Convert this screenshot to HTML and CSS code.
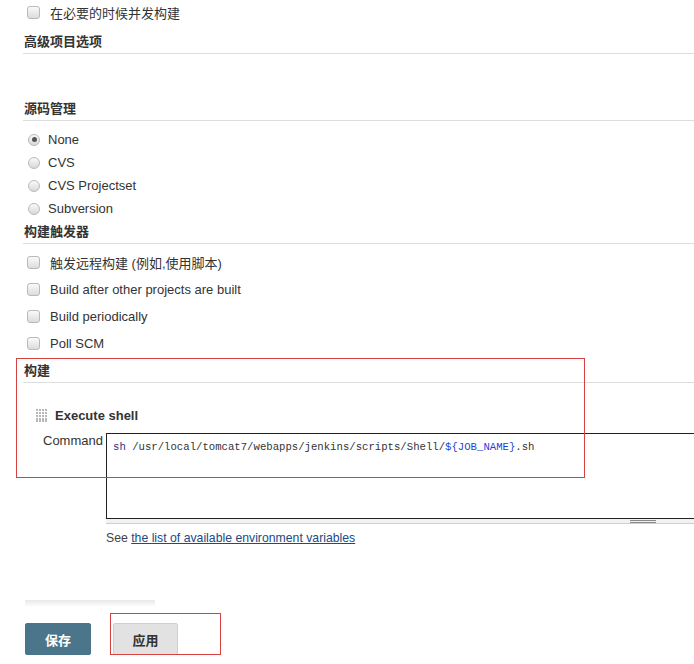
FILE: index.html
```html
<!DOCTYPE html>
<html lang="zh">
<head>
    <meta charset="UTF-8">
    <title>配置</title>
    <link rel="stylesheet" href="styles.css">
</head>
<body>
    <div class="page">
        <div class="check-row"><span class="checkbox"></span><span>在必要的时候并发构建</span></div>

        <div class="section-head first">高级项目选项</div>
        <div class="section-head scm">源码管理</div>
        <div class="radio-list">
            <div class="radio-row"><span class="radio checked"></span><span>None</span></div>
            <div class="radio-row"><span class="radio"></span><span>CVS</span></div>
            <div class="radio-row"><span class="radio"></span><span>CVS Projectset</span></div>
            <div class="radio-row"><span class="radio"></span><span>Subversion</span></div>
        </div>

        <div class="section-head triggers">构建触发器</div>
        <div class="check-list">
            <div class="check-row"><span class="checkbox"></span><span>触发远程构建 (例如,使用脚本)</span></div>
            <div class="check-row"><span class="checkbox"></span><span>Build after other projects are built</span></div>
            <div class="check-row"><span class="checkbox"></span><span>Build periodically</span></div>
            <div class="check-row"><span class="checkbox"></span><span>Poll SCM</span></div>
        </div>

        <div class="section-head build">构建</div>
        <div class="builder-title">
            <svg class="handle" width="12" height="13" viewBox="0 0 12 13">
                <g fill="#b8b8b8">
                    <rect x="0" y="0" width="2" height="2"/><rect x="3" y="0" width="2" height="2"/><rect x="6" y="0" width="2" height="2"/><rect x="9" y="0" width="2" height="2"/>
                    <rect x="0" y="3" width="2" height="2"/><rect x="3" y="3" width="2" height="2"/><rect x="6" y="3" width="2" height="2"/><rect x="9" y="3" width="2" height="2"/>
                    <rect x="0" y="6" width="2" height="2"/><rect x="3" y="6" width="2" height="2"/><rect x="6" y="6" width="2" height="2"/><rect x="9" y="6" width="2" height="2"/>
                    <rect x="0" y="9" width="2" height="2"/><rect x="3" y="9" width="2" height="2"/><rect x="6" y="9" width="2" height="2"/><rect x="9" y="9" width="2" height="2"/>
                    <rect x="0" y="11" width="2" height="2"/><rect x="3" y="11" width="2" height="2"/><rect x="6" y="11" width="2" height="2"/><rect x="9" y="11" width="2" height="2"/>
                </g>
            </svg>
            <span>Execute shell</span>
        </div>
        <div class="field">
            <div class="field-label">Command</div>
            <div class="editor-wrap">
                <div class="editor"><span class="kw">sh</span> /usr/local/tomcat7/webapps/jenkins/scripts/Shell/<span class="var">${JOB_NAME}</span>.sh</div>
                <div class="resizer"><span class="grip"></span></div>
                <div class="help">See <a href="#">the list of available environment variables</a></div>
            </div>
        </div>

        <div class="bottom-shade"></div>
        <div class="actions">
            <button class="btn save">保存</button>
            <button class="btn apply">应用</button>
        </div>

        <div class="mark mark-build"></div>
        <div class="mark mark-apply"></div>
    </div>
</body>
</html>
```

FILE: styles.css
```css
body {
    margin: 0;
    overflow: hidden;
    background: #fff;
    color: #333;
    font-family: 'Liberation Sans', Arial, 'Noto Sans CJK SC', sans-serif;
    font-size: 13px;
}

.page {
    position: relative;
    width: 694px;
    height: 664px;
    overflow: hidden;
}

.check-row {
    display: flex;
    align-items: center;
    gap: 10px;
    height: 24px;
    padding-left: 27px;
}

.check-list { margin-top: 5px; }
.check-list .check-row { height: 27px; }

.checkbox {
    width: 11px;
    height: 11px;
    border: 1px solid #b9b9b9;
    border-radius: 3px;
    background: linear-gradient(#fafafa, #dcdcdc);
    flex: none;
}

.radio-list { margin-top: 7px; }

.radio-row {
    display: flex;
    align-items: center;
    gap: 8px;
    height: 23px;
    padding-left: 28px;
}

.radio {
    width: 10px;
    height: 10px;
    border: 1px solid #b9b9b9;
    border-radius: 50%;
    background: linear-gradient(#fafafa, #d8d8d8);
    flex: none;
    display: flex;
    align-items: center;
    justify-content: center;
}

.radio.checked::after {
    content: "";
    width: 5px;
    height: 5px;
    border-radius: 50%;
    background: #555;
}

.section-head {
    margin-left: 23px;
    padding: 0 0 2px 1px;
    line-height: 18px;
    font-weight: bold;
    border-bottom: 1px solid #ddd;
    color: #333;
}

.section-head.first { margin-top: 9px; }
.section-head.scm { margin-top: 46px; }
.section-head.triggers { margin-top: 3px; }
.section-head.build { margin-top: 5px; }

.builder-title {
    display: flex;
    align-items: center;
    gap: 7px;
    height: 20px;
    margin: 22px 0 0 36px;
    font-weight: bold;
}

.field {
    display: flex;
    margin-top: 8px;
    padding-left: 43px;
}

.field-label {
    flex: none;
    width: 63px;
    line-height: 16px;
}

.editor-wrap {
    flex: 1;
    min-width: 0;
}

.editor {
    height: 74px;
    border: 1px solid #222;
    border-right: none;
    padding: 5px 6px;
    font-family: 'Liberation Mono', 'Courier New', monospace;
    font-size: 10.65px;
    line-height: 16px;
    color: #333;
    white-space: pre;
}

.editor .kw { color: #30307a; }
.editor .var { color: #1f3fd6; }

.resizer {
    height: 4px;
    padding-right: 38px;
    background: #f2f2f2;
    border-bottom: 1px solid #cfcfcf;
    display: flex;
    justify-content: flex-end;
    align-items: center;
}

.grip {
    width: 26px;
    height: 1px;
    border-top: 1px solid #888;
    border-bottom: 1px solid #888;
}

.help {
    margin-top: 6px;
    font-size: 12.25px;
    line-height: 16px;
    color: #444;
}

.help a { color: #204a87; }

.bottom-shade {
    width: 130px;
    height: 7px;
    margin: 54px 0 0 25px;
    background: linear-gradient(#e8e8e8, #fff);
}

.actions {
    display: flex;
    gap: 22px;
    margin: 16px 0 0 25px;
}

.btn {
    height: 32px;
    border-radius: 2px;
    font-family: 'Liberation Sans', 'Noto Sans CJK SC', sans-serif;
    font-size: 13px;
    font-weight: bold;
}

.btn.save {
    width: 66px;
    border: 1px solid #4b758b;
    background: #4b758b;
    color: #fff;
}

.btn.apply {
    width: 65px;
    border: 1px solid #cfcfcf;
    background: #e2e2e2;
    color: #333;
}

.mark {
    position: absolute;
    border: 1px solid #d6423f;
}

.mark-build { left: 16px; top: 358px; width: 567px; height: 118px; }
.mark-apply { left: 110px; top: 613px; width: 109px; height: 40px; }
```
